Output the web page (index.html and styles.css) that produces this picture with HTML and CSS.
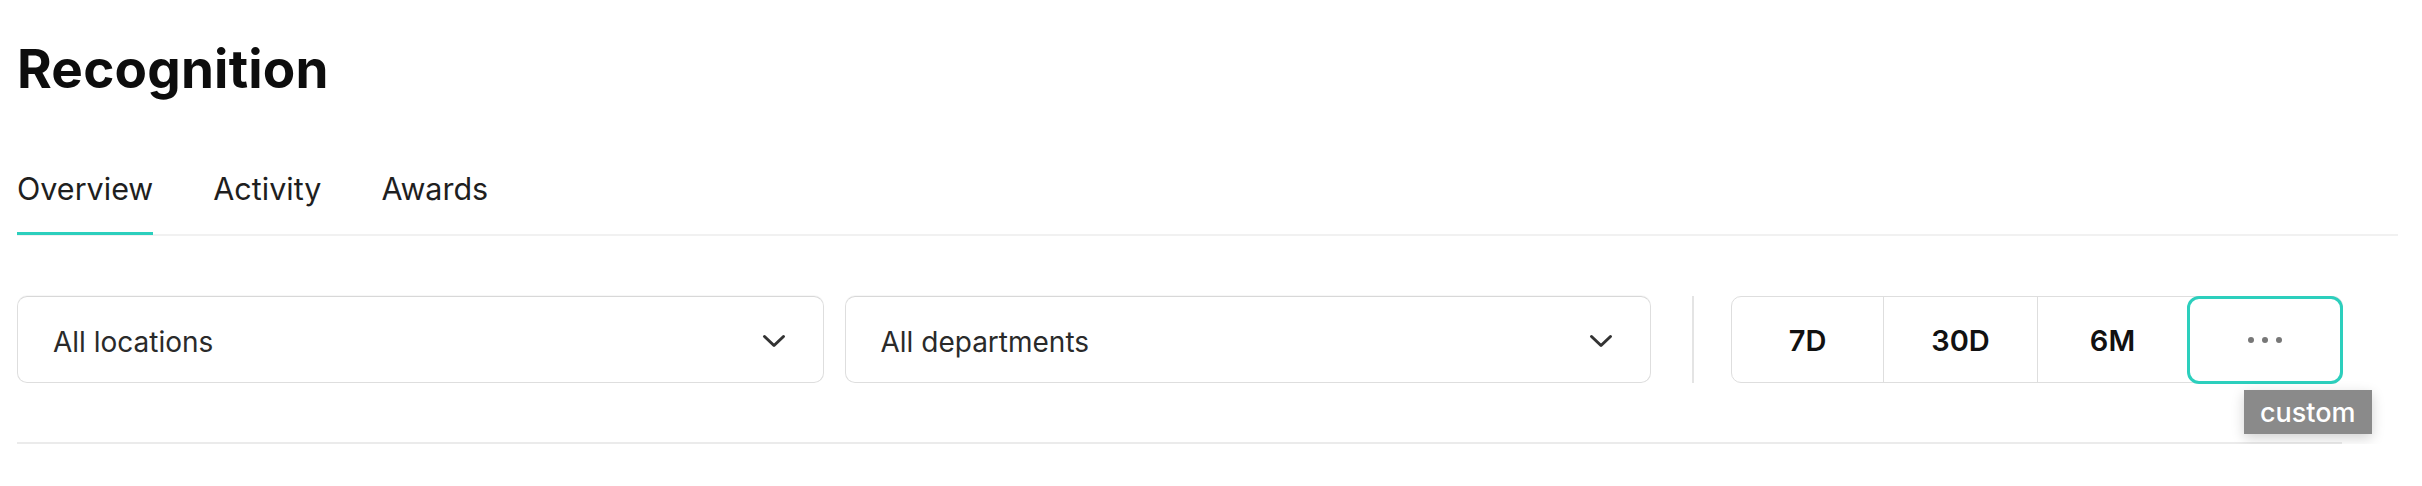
FILE: index.html
```html
<!DOCTYPE html>
<html lang="en">
<head>
<meta charset="utf-8">
<title>Recognition</title>
<link rel="stylesheet" href="styles.css">
</head>
<body>
<div class="page">
  <h1 class="title">Recognition</h1>
  <nav class="tabs">
    <a class="tab tab-active">Overview</a>
    <a class="tab">Activity</a>
    <a class="tab">Awards</a>
  </nav>
  <div class="filters">
    <div class="select">
      <span>All locations</span>
      <svg class="chev" width="24" height="14" viewBox="0 0 24 14"><polyline points="2.5,2.5 12,11.5 21.5,2.5" fill="none" stroke="#333" stroke-width="3" stroke-linecap="round" stroke-linejoin="round"/></svg>
    </div>
    <div class="select">
      <span>All departments</span>
      <svg class="chev" width="24" height="14" viewBox="0 0 24 14"><polyline points="2.5,2.5 12,11.5 21.5,2.5" fill="none" stroke="#333" stroke-width="3" stroke-linecap="round" stroke-linejoin="round"/></svg>
    </div>
    <div class="vdivider"></div>
    <div class="segmented">
      <div class="seg">7D</div>
      <div class="seg">30D</div>
      <div class="seg">6M</div>
      <div class="seg seg-active">
        <svg width="34" height="6" viewBox="0 0 34 6"><circle cx="3" cy="3" r="3" fill="#777"/><circle cx="17" cy="3" r="3" fill="#777"/><circle cx="31" cy="3" r="3" fill="#777"/></svg>
        <div class="tooltip">custom</div>
      </div>
    </div>
  </div>
  <div class="rule"></div>
</div>
</body>
</html>
```

FILE: styles.css
```css
html, body {
  margin: 0;
  padding: 0;
  background: #fff;
}

body {
  font-family: Inter, "Liberation Sans", sans-serif;
  color: #1a1a1a;
}

.page {
  padding: 37px 24px 0 17px;
}

.title {
  margin: 0;
  font-size: 53px;
  line-height: 64px;
  font-weight: 700;
  color: #0d0d0d;
  letter-spacing: 0.2px;
}

.tabs {
  margin-top: 68px;
  display: flex;
  gap: 60px;
  border-bottom: 2px solid #f1f1f1;
}

.tab {
  font-size: 30.5px;
  line-height: 40px;
  color: #1f1f1f;
  padding-bottom: 23px;
  border-bottom: 3px solid transparent;
  margin-bottom: -1px;
}

.tab-active {
  border-bottom-color: #2ccfbd;
}

.filters {
  margin-top: 60px;
  margin-right: 55px;
  display: flex;
  align-items: stretch;
  height: 87px;
}

.select {
  flex: 1 1 0;
  box-sizing: border-box;
  display: flex;
  align-items: center;
  justify-content: space-between;
  border: 1px solid #dedede;
  border-top-color: #d8d8d8;
  border-radius: 10px;
  padding: 4px 37px 0 35px;
  font-size: 28px;
  color: #2a2a2a;
  box-shadow: 0 -1px 0 rgba(0,0,0,0.03);
}

.select + .select {
  margin-left: 21px;
}

.chev {
  display: block;
  margin-top: -2px;
}

.vdivider {
  width: 2px;
  background: #e4e4e4;
  margin: 0 37px 0 41px;
}

.segmented {
  flex: 0 0 612px;
  box-sizing: border-box;
  display: grid;
  grid-template-columns: 151px 154px 150px 1fr;
  border: 1px solid #dedede;
  border-radius: 10px;
}

.seg {
  display: flex;
  align-items: center;
  justify-content: center;
  padding-top: 2px;
  font-size: 29px;
  font-weight: 600;
  color: #111;
  border-left: 1px solid #dedede;
}

.seg:first-child {
  border-left: none;
}

.seg-active {
  position: relative;
  border: 3px solid #2ccfbd;
  border-radius: 12px;
  margin: -1px -1px -2px 0;
  padding-top: 0;
}

.tooltip {
  position: absolute;
  top: calc(100% + 9px);
  left: 54px;
  height: 44px;
  box-sizing: border-box;
  padding: 0 16px;
  display: flex;
  align-items: center;
  background: #8a8a8a;
  color: #fff;
  font-size: 27px;
  font-weight: 500;
  white-space: nowrap;
  box-shadow: 0 4px 12px rgba(0,0,0,0.18);
}

.rule {
  margin-top: 59px;
  margin-right: 56px;
  height: 2px;
  background: #ebebeb;
}
```
